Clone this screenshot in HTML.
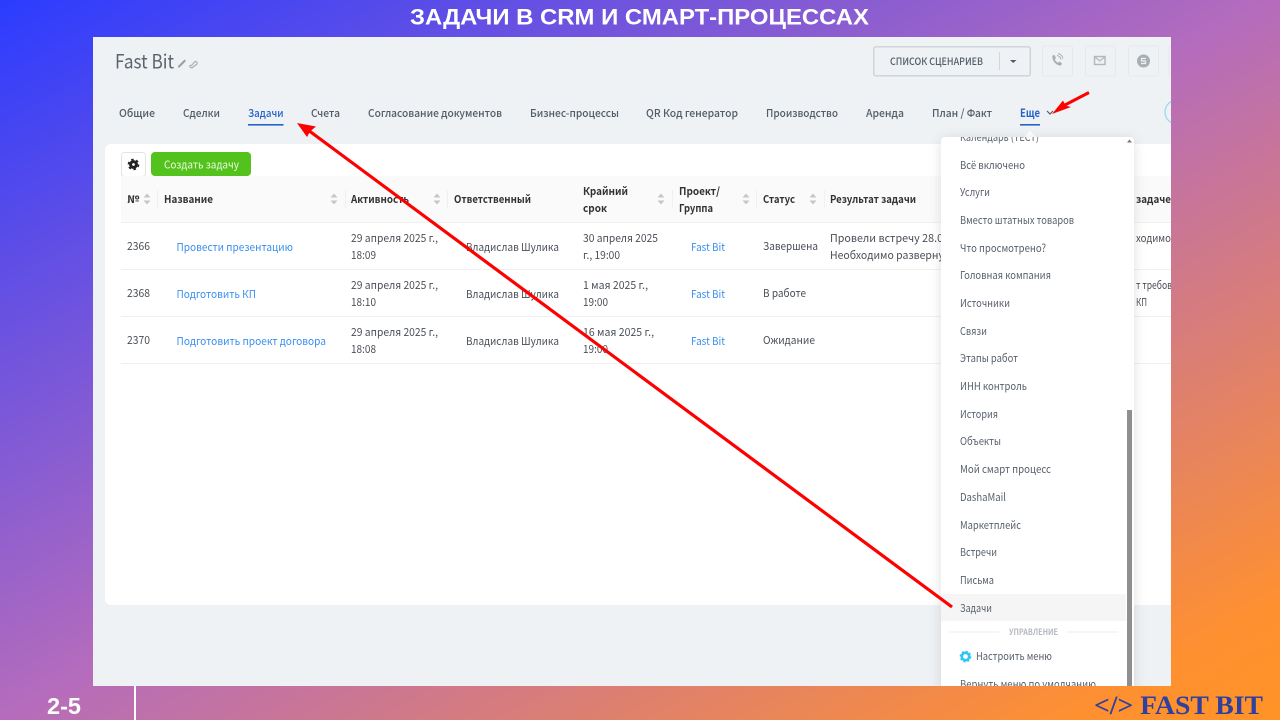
<!DOCTYPE html>
<html lang="ru"><head><meta charset="utf-8"><title>Задачи в CRM</title>
<style>
html,body{margin:0;padding:0;width:1280px;height:720px;overflow:hidden}
body{background:linear-gradient(to bottom right,#2b3cff 0%,#b56cbc 50%,#ff9030 92%,#ff9326 100%)}
svg{position:absolute;left:0;top:0;display:block}
text{font-family:"Noto Sans CJK SC","Liberation Sans",sans-serif;font-size:11px;fill:#535c69}
.h{font-weight:700;fill:#333;font-size:10.800px}
.tab{fill:#535c69;font-weight:500;font-size:11px}
.l{fill:#3a8ff0}
.m{fill:#59616c}
.d{fill:#4a4f57}
</style></head><body>
<svg width="1280" height="720" viewBox="0 0 1280 720" xmlns="http://www.w3.org/2000/svg">
<defs>
<filter id="sh" x="-20%" y="-5%" width="140%" height="110%"><feDropShadow dx="0" dy="2" stdDeviation="6" flood-color="#000" flood-opacity=".12"/></filter>
<filter id="b" x="0" y="0" width="100%" height="100%"><feGaussianBlur stdDeviation=".3"/></filter>
<clipPath id="page"><rect x="93" y="37" width="1078" height="649"/></clipPath>
<clipPath id="menu"><rect x="941" y="137" width="193" height="549"/></clipPath>
<g id="sort"><path d="M0-5.500 3.500-1.500H-3.500Z M0 5.500 3.500 1.500H-3.500Z" fill="#c4c6c9"/></g>
</defs>
<text x="410" y="24.500" textLength="459" lengthAdjust="spacingAndGlyphs" style="font:bold 22px 'Liberation Sans',sans-serif;fill:#fff">ЗАДАЧИ В CRM И СМАРТ-ПРОЦЕССАХ</text>

<g clip-path="url(#page)"><g filter="url(#b)">
<rect x="93" y="37" width="1078" height="649" fill="#eef2f4"/>
<text x="115" y="68.500" textLength="59" lengthAdjust="spacingAndGlyphs" style="font-size:19.500px;fill:#5b636e">Fast Bit</text>
<path d="M178 66 184.500 59.500 186 61 179.500 67.500 178 67.500Z" fill="#9aa0a6"/>
<path d="M191 66 195 61.500A1.800 1.800 0 0 1 197 64L192.500 67.500A1.500 1.500 0 0 1 190.500 65" fill="none" stroke="#a8adb2" stroke-width="1.200"/>

<rect x="873.800" y="46.800" width="156.500" height="29" rx="2" fill="#eef2f4" stroke="#ccd2d7" stroke-width="1.400"/>
<text x="890" y="64.800" textLength="93" lengthAdjust="spacingAndGlyphs" style="font-size:10px;font-weight:500;fill:#535c69">СПИСОК СЦЕНАРИЕВ</text>
<rect x="999" y="52" width="1" height="18" fill="#d2d7db"/>
<path d="M1010 60H1016.500L1013.200 63Z" fill="#535c69"/>

<g fill="none" stroke="#e6e9eb" stroke-width="1">
<rect x="1042.500" y="46" width="30" height="30" rx="2"/>
<rect x="1085.500" y="46" width="30" height="30" rx="2"/>
<rect x="1128.500" y="46" width="30" height="30" rx="2"/>
<rect x="1169" y="46" width="30" height="30" rx="2"/>
</g>
<path d="M1052.500 55.500 1054.500 55 1056 58 1054.800 59.500C1055.500 61 1056.500 62 1058 62.800L1059.500 61.500 1062 63.500 1061 65.500C1056.500 66 1051.500 60.500 1052.500 55.500Z" fill="#a9aeb3"/>
<path d="M1057 55.500C1059 55.800 1060.500 57.200 1061 59.500M1058 53.500C1060.500 54 1062.500 56 1063 58.500" fill="none" stroke="#a9aeb3" stroke-width="1"/>
<rect x="1094.500" y="56.500" width="10.500" height="8" fill="none" stroke="#b2b7bb" stroke-width="1.400"/>
<path d="M1095 57 1099.800 61 1104.500 57" fill="none" stroke="#b2b7bb" stroke-width="1.200"/>
<circle cx="1143.500" cy="61" r="6.500" fill="#a9aeb3"/>
<path d="M1146 58.500H1141.500V61H1145.500V63.500H1141" fill="none" stroke="#eef2f4" stroke-width="1.200"/>

<text class="tab" x="119" y="117" textLength="36" lengthAdjust="spacingAndGlyphs">Общие</text>
<text class="tab" x="183" y="117" textLength="37" lengthAdjust="spacingAndGlyphs">Сделки</text>
<text class="tab" x="248" y="117" textLength="35.500" lengthAdjust="spacingAndGlyphs" style="fill:#2763c9">Задачи</text>
<text class="tab" x="311" y="117" textLength="29" lengthAdjust="spacingAndGlyphs">Счета</text>
<text class="tab" x="368" y="117" textLength="134" lengthAdjust="spacingAndGlyphs">Согласование документов</text>
<text class="tab" x="530" y="117" textLength="89" lengthAdjust="spacingAndGlyphs">Бизнес-процессы</text>
<text class="tab" x="646" y="117" textLength="92" lengthAdjust="spacingAndGlyphs">QR Код генератор</text>
<text class="tab" x="766" y="117" textLength="72" lengthAdjust="spacingAndGlyphs">Производство</text>
<text class="tab" x="866" y="117" textLength="38" lengthAdjust="spacingAndGlyphs">Аренда</text>
<text class="tab" x="932" y="117" textLength="60" lengthAdjust="spacingAndGlyphs">План / Факт</text>
<text class="tab" x="1020" y="117" textLength="20" lengthAdjust="spacingAndGlyphs" style="fill:#2763c9;font-weight:700">Еще</text>
<path d="M1047 111 1050 114 1053 111" fill="none" stroke="#535c69" stroke-width="1.200"/>
<rect x="248" y="124" width="35.500" height="1.600" fill="#2763c9"/>
<rect x="1020" y="124" width="20" height="1.600" fill="#2763c9"/>
<circle cx="1177" cy="112" r="12" fill="none" stroke="#8fd9f5" stroke-width="1.200"/>

<rect x="105" y="144" width="1090" height="461" rx="6" fill="#fff"/>
<rect x="121.500" y="152.500" width="24" height="24" rx="3" fill="#fff" stroke="#e4e4e4"/>
<circle cx="133.500" cy="164.500" r="2.900" fill="none" stroke="#222" stroke-width="3"/>
<circle cx="133.500" cy="164.500" r="5" fill="none" stroke="#222" stroke-width="1.600" stroke-dasharray="2.600 2.640"/>
<rect x="151" y="152" width="100" height="24" rx="4" fill="#53c21a"/>
<text x="164" y="168.500" textLength="75" lengthAdjust="spacingAndGlyphs" style="fill:#eafbe0">Создать задачу</text>

<rect x="121" y="176" width="1060" height="46" fill="#fafafa"/>
<g fill="#f0f0f0">
<rect x="121" y="222" width="1060" height="1"/><rect x="121" y="269" width="1060" height="1"/><rect x="121" y="316" width="1060" height="1"/><rect x="121" y="363" width="1060" height="1"/>
<rect x="157" y="190" width="1" height="18"/><rect x="345" y="190" width="1" height="18"/><rect x="447" y="190" width="1" height="18"/><rect x="672" y="190" width="1" height="18"/><rect x="756" y="190" width="1" height="18"/><rect x="824" y="190" width="1" height="18"/>
</g>
<use href="#sort" x="147" y="199"/><use href="#sort" x="334" y="199"/><use href="#sort" x="437" y="199"/><use href="#sort" x="661" y="199"/><use href="#sort" x="746" y="199"/><use href="#sort" x="813" y="199"/>
<text class="h" x="127" y="203" textLength="12.500" lengthAdjust="spacingAndGlyphs">№</text>
<text class="h" x="164" y="203" textLength="49" lengthAdjust="spacingAndGlyphs">Название</text>
<text class="h" x="351" y="203" textLength="58" lengthAdjust="spacingAndGlyphs">Активность</text>
<text class="h" x="454" y="203" textLength="77" lengthAdjust="spacingAndGlyphs">Ответственный</text>
<text class="h" x="583" y="195" textLength="45" lengthAdjust="spacingAndGlyphs">Крайний</text>
<text class="h" x="583" y="212" textLength="24" lengthAdjust="spacingAndGlyphs">срок</text>
<text class="h" x="679" y="195" textLength="41" lengthAdjust="spacingAndGlyphs">Проект/</text>
<text class="h" x="679" y="212" textLength="34" lengthAdjust="spacingAndGlyphs">Группа</text>
<text class="h" x="763" y="203" textLength="32" lengthAdjust="spacingAndGlyphs">Статус</text>
<text class="h" x="830" y="203" textLength="86" lengthAdjust="spacingAndGlyphs">Результат задачи</text>
<text class="h" x="1136" y="203" textLength="35" lengthAdjust="spacingAndGlyphs">задаче</text>

<text class="d" x="127" y="250" textLength="23" lengthAdjust="spacingAndGlyphs">2366</text>
<text class="l" x="176.500" y="251" textLength="116.500" lengthAdjust="spacingAndGlyphs">Провести презентацию</text>
<text class="d" x="351" y="242" textLength="87" lengthAdjust="spacingAndGlyphs">29 апреля 2025 г.,</text>
<text class="d" x="351" y="259" textLength="25" lengthAdjust="spacingAndGlyphs">18:09</text>
<text class="d" x="466" y="251" textLength="93" lengthAdjust="spacingAndGlyphs">Владислав Шулика</text>
<text class="d" x="583" y="242" textLength="75" lengthAdjust="spacingAndGlyphs">30 апреля 2025</text>
<text class="d" x="583" y="259" textLength="37" lengthAdjust="spacingAndGlyphs">г., 19:00</text>
<text class="l" x="691" y="251" textLength="34" lengthAdjust="spacingAndGlyphs">Fast Bit</text>
<text class="d" x="763" y="250" textLength="55" lengthAdjust="spacingAndGlyphs">Завершена</text>
<text class="d" x="830" y="242" textLength="119" lengthAdjust="spacingAndGlyphs">Провели встречу 28.04</text>
<text class="d" x="830" y="259" textLength="125" lengthAdjust="spacingAndGlyphs">Необходимо развернуть</text>
<text class="d" x="1136" y="242" textLength="35" lengthAdjust="spacingAndGlyphs">ходимо</text>

<text class="d" x="127" y="297" textLength="23" lengthAdjust="spacingAndGlyphs">2368</text>
<text class="l" x="176.500" y="298" textLength="79.500" lengthAdjust="spacingAndGlyphs">Подготовить КП</text>
<text class="d" x="351" y="289" textLength="87" lengthAdjust="spacingAndGlyphs">29 апреля 2025 г.,</text>
<text class="d" x="351" y="306" textLength="25" lengthAdjust="spacingAndGlyphs">18:10</text>
<text class="d" x="466" y="298" textLength="93" lengthAdjust="spacingAndGlyphs">Владислав Шулика</text>
<text class="d" x="583" y="289" textLength="65" lengthAdjust="spacingAndGlyphs">1 мая 2025 г.,</text>
<text class="d" x="583" y="306" textLength="25" lengthAdjust="spacingAndGlyphs">19:00</text>
<text class="l" x="691" y="298" textLength="34" lengthAdjust="spacingAndGlyphs">Fast Bit</text>
<text class="d" x="763" y="297" textLength="43" lengthAdjust="spacingAndGlyphs">В работе</text>
<text class="d" x="1136" y="289" textLength="36" lengthAdjust="spacingAndGlyphs">т требов</text>
<text class="d" x="1136" y="306" textLength="11" lengthAdjust="spacingAndGlyphs">КП</text>

<text class="d" x="127" y="344" textLength="23" lengthAdjust="spacingAndGlyphs">2370</text>
<text class="l" x="176.500" y="345" textLength="149.500" lengthAdjust="spacingAndGlyphs">Подготовить проект договора</text>
<text class="d" x="351" y="336" textLength="87" lengthAdjust="spacingAndGlyphs">29 апреля 2025 г.,</text>
<text class="d" x="351" y="353" textLength="25" lengthAdjust="spacingAndGlyphs">18:08</text>
<text class="d" x="466" y="345" textLength="93" lengthAdjust="spacingAndGlyphs">Владислав Шулика</text>
<text class="d" x="583" y="336" textLength="71" lengthAdjust="spacingAndGlyphs">16 мая 2025 г.,</text>
<text class="d" x="583" y="353" textLength="25" lengthAdjust="spacingAndGlyphs">19:00</text>
<text class="l" x="691" y="345" textLength="34" lengthAdjust="spacingAndGlyphs">Fast Bit</text>
<text class="d" x="763" y="344" textLength="52" lengthAdjust="spacingAndGlyphs">Ожидание</text>

<path d="M1024 137 1030 131 1036 137Z" fill="#fff"/>
<rect x="941" y="137" width="193" height="600" rx="4" fill="#fff" filter="url(#sh)"/>
<g clip-path="url(#menu)">
<text class="m" x="960" y="141" textLength="79" lengthAdjust="spacingAndGlyphs">Календарь (ТЕСТ)</text>
<text class="m" x="960" y="169" textLength="65" lengthAdjust="spacingAndGlyphs">Всё включено</text>
<text class="m" x="960" y="196" textLength="30" lengthAdjust="spacingAndGlyphs">Услуги</text>
<text class="m" x="960" y="224" textLength="114" lengthAdjust="spacingAndGlyphs">Вместо штатных товаров</text>
<text class="m" x="960" y="252" textLength="86" lengthAdjust="spacingAndGlyphs">Что просмотрено?</text>
<text class="m" x="960" y="279" textLength="91" lengthAdjust="spacingAndGlyphs">Головная компания</text>
<text class="m" x="960" y="307" textLength="50" lengthAdjust="spacingAndGlyphs">Источники</text>
<text class="m" x="960" y="335" textLength="27" lengthAdjust="spacingAndGlyphs">Связи</text>
<text class="m" x="960" y="362" textLength="58" lengthAdjust="spacingAndGlyphs">Этапы работ</text>
<text class="m" x="960" y="390" textLength="67" lengthAdjust="spacingAndGlyphs">ИНН контроль</text>
<text class="m" x="960" y="418" textLength="38" lengthAdjust="spacingAndGlyphs">История</text>
<text class="m" x="960" y="445" textLength="41" lengthAdjust="spacingAndGlyphs">Объекты</text>
<text class="m" x="960" y="473" textLength="91" lengthAdjust="spacingAndGlyphs">Мой смарт процесс</text>
<text class="m" x="960" y="501" textLength="46" lengthAdjust="spacingAndGlyphs">DashaMail</text>
<text class="m" x="960" y="529" textLength="61" lengthAdjust="spacingAndGlyphs">Маркетплейс</text>
<text class="m" x="960" y="556" textLength="37" lengthAdjust="spacingAndGlyphs">Встречи</text>
<text class="m" x="960" y="584" textLength="34" lengthAdjust="spacingAndGlyphs">Письма</text>
<rect x="941" y="594" width="185" height="27" fill="#f5f5f5"/>
<text class="m" x="960" y="612" textLength="32" lengthAdjust="spacingAndGlyphs">Задачи</text>
<rect x="949" y="631.500" width="50" height="1" fill="#eeeeee"/><rect x="1067" y="631.500" width="51" height="1" fill="#eeeeee"/>
<text x="1009" y="635" textLength="49" lengthAdjust="spacingAndGlyphs" style="font-size:8.500px;fill:#b4b8bd;font-weight:700">УПРАВЛЕНИЕ</text>
<circle cx="965.500" cy="656.500" r="3.700" fill="none" stroke="#2fc6f6" stroke-width="2.600"/>
<circle cx="965.500" cy="656.500" r="5.200" fill="none" stroke="#2fc6f6" stroke-width="1.400" stroke-dasharray="2 2.080"/>
<text class="m" x="976" y="660" textLength="76" lengthAdjust="spacingAndGlyphs">Настроить меню</text>
<text class="m" x="960" y="688" textLength="136" lengthAdjust="spacingAndGlyphs">Вернуть меню по умолчанию</text>
<rect x="1127" y="410" width="5" height="280" fill="#8f8f8f"/>
<path d="M1129.500 139.500 1132 142.500H1127Z" fill="#777"/>
</g>
</g></g>

<g fill="#ff0000" stroke="none">
<path d="M297 123 316 126.500 310 131.500 307 137Z"/>
<path d="M1052 114 1063 100.500 1065.500 105.500 1071 107Z"/>
</g>
<path d="M952 607 308 130" stroke="#ff0000" stroke-width="3.200" fill="none"/>
<path d="M1089 92.500 1063 106" stroke="#ff0000" stroke-width="3" fill="none"/>

<text x="47" y="714" textLength="34" lengthAdjust="spacingAndGlyphs" style="font:bold 23px 'Liberation Sans',sans-serif;fill:#fff">2-5</text>
<rect x="134" y="686" width="2" height="34" fill="#fff"/>
<text x="1094" y="714" textLength="169" lengthAdjust="spacingAndGlyphs" style="font:bold 26px 'Liberation Serif',serif;fill:#2f409f">&lt;/&gt; FAST BIT</text>
</svg>
</body></html>
